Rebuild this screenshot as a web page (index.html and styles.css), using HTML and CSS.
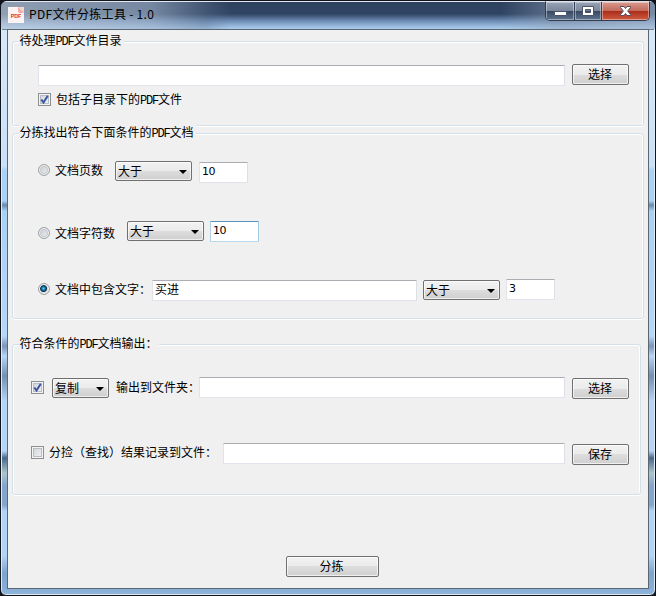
FILE: index.html
```html
<!DOCTYPE html>
<html lang="zh-CN">
<head>
<meta charset="utf-8">
<title>PDF文件分拣工具 - 1.0</title>
<link rel="stylesheet" href="styles.css">
</head>
<body>
<div class="window">
  <header class="titlebar">
    <svg class="app-icon" width="16" height="16" viewBox="0 0 16 16">
      <path d="M0 0H11L16 5V16H0Z" fill="#fbf3f1"/>
      <path d="M10 0L16 6H12Q10 6 10 4Z" fill="#efaaa4"/>
      <path d="M11 0H16V5Z" fill="#f6d5d1"/>
      <text x="2.7" y="11" class="icon-text" textLength="10.5" lengthAdjust="spacingAndGlyphs">PDF</text>
    </svg>
    <h1 class="title">PDF文件分拣工具 - 1.0</h1>
    <div class="controls">
      <span class="ctl"><svg width="28" height="18" viewBox="0 0 28 18"><rect x="8.5" y="9.5" width="12" height="4" rx=".5" fill="#fff" stroke="#4b5468"/></svg></span>
      <span class="ctl"><svg width="26" height="18" viewBox="0 0 26 18"><path d="M7.500 4.500H18.500V13.500H7.500ZM10.500 7.500V10.500H15.500V7.500Z" fill="#fff" fill-rule="evenodd" stroke="#4b5468"/></svg></span>
      <span class="ctl close"><svg width="47" height="18" viewBox="0 0 47 18"><path d="M18.500 4.500H22L23.500 6.500L25 4.500H28.500V5.500L25.700 9L28.500 12.500V13.500H25L23.500 11.500L22 13.500H18.500V12.500L21.300 9L18.500 5.500Z" fill="#fff" stroke="#5a4a58"/></svg></span>
    </div>
  </header>
  <main class="client">
    <section class="group source">
      <h2 class="legend">待处理<span class="lat">PDF</span>文件目录</h2>
      <div class="row r-dir">
        <span class="field w527"></span>
        <span class="button push g7 up1">选择</span>
      </div>
      <div class="row r-sub">
        <span class="check"><svg width="13" height="13" viewBox="0 0 13 13"><path d="M3.300 6.500L5.500 9.500L9.800 2.800" fill="none" stroke="#3c55a0" stroke-width="2"/></svg></span>
        <span class="label g5">包括子目录下的<span class="lat">PDF</span>文件</span>
      </div>
    </section>
    <section class="group filter">
      <h2 class="legend">分拣找出符合下面条件的<span class="lat">PDF</span>文档</h2>
      <div class="row r-pages">
        <span class="radio d3"></span>
        <span class="label g4 d3">文档页数</span>
        <span class="select g12">大于</span>
        <span class="field num g7 d1">10</span>
      </div>
      <div class="row r-chars">
        <span class="radio d6"></span>
        <span class="label g4 d6">文档字符数</span>
        <span class="select g12">大于</span>
        <span class="field num focus g6">10</span>
      </div>
      <div class="row r-words">
        <span class="radio on d4"></span>
        <span class="label g4 d4">文档中包含文字：</span>
        <span class="field w265 g1 d1">买进</span>
        <span class="select g6 d1">大于</span>
        <span class="field num g6">3</span>
      </div>
    </section>
    <section class="group output">
      <h2 class="legend wide">符合条件的<span class="lat">PDF</span>文档输出：</h2>
      <div class="row r-folder">
        <span class="check d4"><svg width="13" height="13" viewBox="0 0 13 13"><path d="M3.300 6.500L5.500 9.500L9.800 2.800" fill="none" stroke="#3c55a0" stroke-width="2"/></svg></span>
        <span class="select small g8 d1">复制</span>
        <span class="label g7 d4">输出到文件夹：</span>
        <span class="field w366"></span>
        <span class="button push g7 d1">选择</span>
      </div>
      <div class="row r-record">
        <span class="check off d3"></span>
        <span class="label g5 d3">分捡（查找）结果记录到文件：</span>
        <span class="field fill g6"></span>
        <span class="button push g7 d1">保存</span>
      </div>
    </section>
    <div class="actions"><span class="button go">分拣</span></div>
  </main>
</div>
</body>
</html>
```

FILE: styles.css
```css
* { box-sizing: border-box; }
body {
  margin: 0;
  background: #10151d;
  font: 12px/14px "Noto Sans CJK SC", sans-serif;
  color: #000;
}
h1, h2 { margin: 0; font: inherit; }
svg { display: block; }

.window {
  position: relative;
  width: 656px;
  height: 596px;
  padding: 0 6px 6px;
  border: 1px solid #10151d;
  border-radius: 7px 7px 6px 6px;
  overflow: hidden;
  background:
    linear-gradient(180deg, transparent 28px, #d5e8fb 29px, #c8e0f8 165px, #a9d0f5 170px, #a9d0f5 200px, #6a89a8 204px, #a9d0f5 210px, #b5d7f8 335px, #7d93b8 345px, #b4d5f5 355px, #7390b0 375px, #b4d5f5 400px, #b4d5f5 450px, #4a6788 457px, #abc4cc 472px, #83a5cb 485px, #83a5cb 504px, #b1d3f5 510px, #b1d3f5 555px, #7ea3cc 572px, #8eb4da 100%);
  box-shadow: inset 0 0 0 1px #e0eaf3;
}
.titlebar {
  display: flex;
  align-items: flex-start;
  height: 28px;
  margin: 0 -6px;
  padding-left: 7px;
  border-top: 1px solid #e5eaf1;
  background:
    linear-gradient(90deg, rgba(195,207,222,.65), rgba(165,182,204,.6) 150px, rgba(100,120,150,.35) 205px, transparent 230px, transparent 500px, rgba(150,165,185,.5) 560px, rgba(170,185,205,.6)),
    linear-gradient(180deg, #2e4260 0, #2f4563 12px, #6e8db5 19px, #a7c8ea 26px);
}
.app-icon { margin-top: 5px; }
.icon-text { font: bold 6px "Liberation Sans", sans-serif; fill: #d92f30; }
.title { margin: 4px 0 0 5px; line-height: 16px; letter-spacing: .3px; white-space: nowrap; }
.controls {
  display: flex;
  height: 20px;
  margin: -1px 5px 0 auto;
  border: 1px solid #303c50;
  border-top-color: #dce3ec;
  border-radius: 0 0 5px 5px;
  overflow: hidden;
}
.ctl {
  height: 18px;
  background: linear-gradient(#98a3b4, #7b879b 48%, #36465f 50%, #607591);
  box-shadow: inset 0 0 0 1px rgba(255,255,255,.4);
}
.ctl + .ctl { border-left: 1px solid #354158; }
.close { background: linear-gradient(#d99b90, #c36b5c 48%, #a92c18 50%, #cf5b42); }

.client {
  width: 642px;
  height: 560px;
  padding: 11px 0 0 4px;
  border: 1px solid #5a6874;
  background: #f0f0f0;
}
.group {
  width: 632px;
  border: 1px solid #d3dfe9;
  border-radius: 3px;
  box-shadow: inset 0 1px #fff, inset 1px 0 #fff, inset -1px 0 #fff, 0 1px #fff;
}
.source { height: 85px; }
.filter { height: 186px; margin-top: 7px; }
.output { width: 629px; height: 151px; margin-top: 25px; }
.legend {
  width: fit-content;
  height: 15px;
  margin: -9px 0 0 6px;
  padding: 0 2px 0 .5px;
  background: #f0f0f0;
  white-space: nowrap;
}
.legend.wide { padding-right: 1px; }
.lat { font-family: "Liberation Mono", monospace; letter-spacing: -1.2px; }

.row { display: flex; align-items: flex-start; }
.r-dir { margin: 17px 0 0 25px; }
.r-sub { margin: 7px 0 0 25px; }
.r-pages { margin: 21px 0 0 25px; height: 21px; }
.r-chars { margin: 39px 0 0 25px; height: 21px; }
.r-words { margin: 37px 0 0 25px; }
.r-folder { margin: 26px 11px 0 18px; height: 22px; }
.r-record { margin: 44px 11px 0 18px; }
.label { line-height: 12px; white-space: nowrap; }

.field {
  height: 21px;
  padding: 1px 2px;
  border: 1px solid #e2e3ea;
  border-top-color: #abadb3;
  border-right-color: #dbdfe6;
  border-radius: 1px;
  background: #fff;
}
.num { width: 49px; padding-top: 2px; font-family: "DejaVu Sans", sans-serif; font-size: 11px; letter-spacing: -.6px; }
.num.focus { border-color: #5794bf #a4c9e3 #b7d9ed #b5cfe7; }
.fill { flex: 1; }
.w527 { width: 527px; }
.w265 { width: 265px; }
.w366 { width: 366px; margin-left: -1px; }

.button, .select {
  border: 1px solid #707070;
  border-radius: 2px;
  background: linear-gradient(#f2f2f2, #ebebeb 50%, #dddddd 50%, #cfcfcf);
  box-shadow: inset 0 0 0 1px rgba(255,255,255,.65);
}
.button { height: 21px; line-height: 17px; text-align: center; }
.push { width: 57px; padding-right: 1px; }
.go { width: 93px; padding-right: 2px; }
.select {
  display: flex;
  justify-content: space-between;
  width: 77px;
  height: 20px;
  padding: 1px 4px 0 2px;
  line-height: 16px;
}
.select::after {
  content: "";
  margin-top: 7px;
  height: 4px;
  border: 4px solid transparent;
  border-top-color: #000;
  border-bottom: 0;
}
.small { width: 57px; }

.check {
  width: 13px;
  height: 13px;
  border: 1px solid #8e8f8f;
  background: linear-gradient(135deg, #cbcfd5, #f6f6f6);
  box-shadow: inset 0 0 0 1px #f4f4f4, inset 0 0 0 2px #b8bec6;
}
.check svg { margin: -1px; }
.radio {
  width: 12px;
  height: 12px;
  margin-right: 1px;
  border: 1px solid #a0a1a1;
  border-radius: 50%;
  background: linear-gradient(135deg, #c3c8ce, #f2f2f2);
  box-shadow: inset 0 0 0 1px #f4f4f4, inset 0 0 0 2px #c5c9ce;
}
.radio.on {
  background: radial-gradient(circle at 45% 45%, #66d5f6 0, #1683b5 1.500px, #0f2e4d 3px, #d5d9dd 4px);
  box-shadow: inset 0 0 0 1px #f4f4f4;
}

.actions { display: flex; margin: 61px 0 0 274px; }

.g1 { margin-left: 1px; }
.g4 { margin-left: 4px; }
.g5 { margin-left: 5px; }
.g6 { margin-left: 6px; }
.g7 { margin-left: 7px; }
.g8 { margin-left: 8px; }
.g12 { margin-left: 12px; }
.d1 { margin-top: 1px; }
.d3 { margin-top: 3px; }
.d4 { margin-top: 4px; }
.d6 { margin-top: 6px; }
.up1 { margin-top: -1px; }
```
